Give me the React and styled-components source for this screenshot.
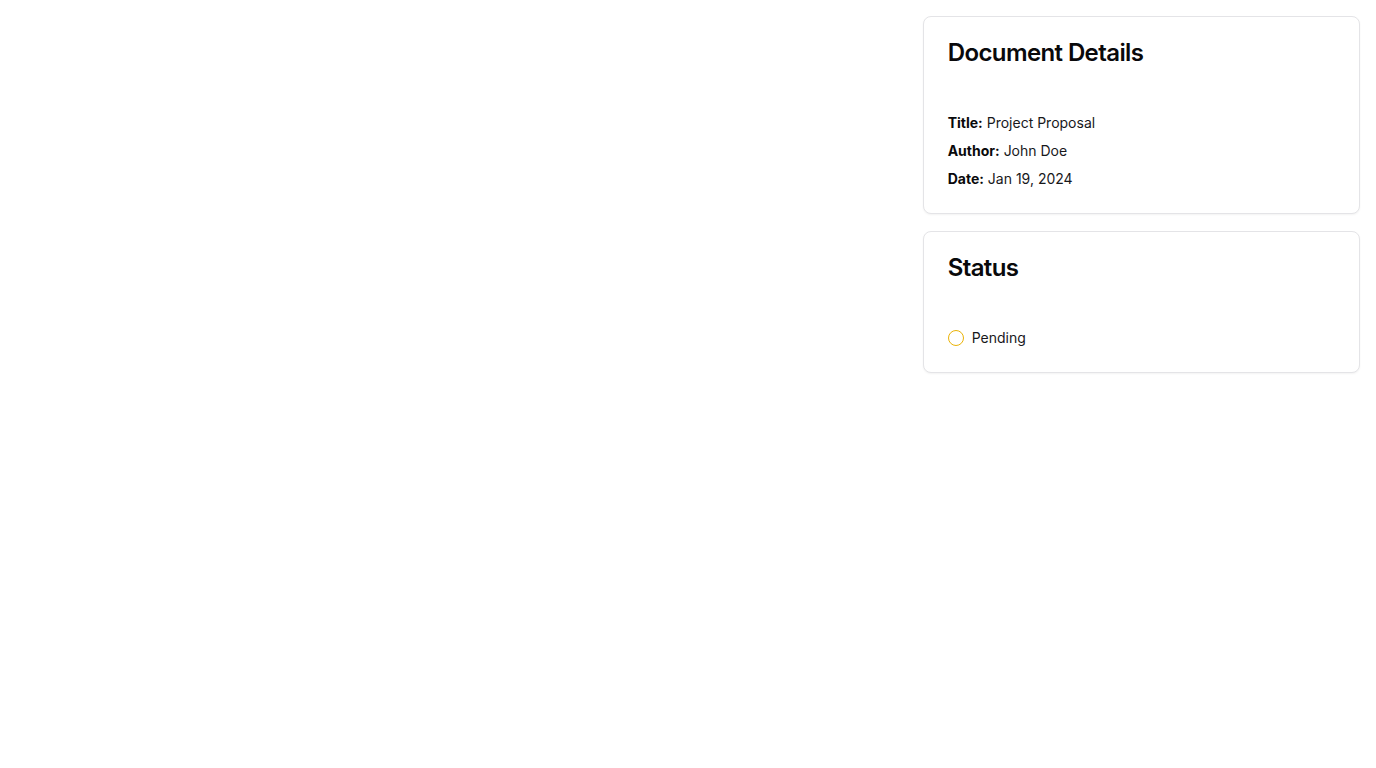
import React from 'react';
import styled, { createGlobalStyle } from 'styled-components';

const GlobalStyle = createGlobalStyle`
  * { box-sizing: border-box; }
  body {
    margin: 0;
    background: #fff;
    font-family: Inter, "Noto Sans", sans-serif;
    color: #09090b;
  }
`;

const Page = styled.div`
  display: grid;
  grid-template-columns: repeat(3, 1fr);
  gap: 16px;
  padding: 16px;
`;

const Column = styled.div`
  grid-column: ${(p) => p.col};
  display: flex;
  flex-direction: column;
  gap: 17px;
`;

const Card = styled.div`
  border: 1px solid #e4e4e7;
  border-radius: 8px;
  background: #fff;
  box-shadow: 0 1px 2px rgba(0, 0, 0, 0.05);
  padding: 24px;
`;

const CardTitle = styled.h3`
  margin: 0 0 48px;
  font-size: 24px;
  line-height: 24px;
  font-weight: 600;
  letter-spacing: -0.025em;
`;

const DetailList = styled.div`
  display: flex;
  flex-direction: column;
  gap: 8px;
`;

const Row = styled.p`
  margin: 0;
  font-size: 14px;
  line-height: 20px;
  color: #18181b;

  strong {
    font-weight: 700;
    color: #09090b;
  }
`;

const StatusRow = styled.div`
  display: flex;
  align-items: center;
  gap: 8px;
  font-size: 14px;
  line-height: 20px;
  color: #18181b;
`;

const StatusDot = styled.span`
  width: 16px;
  height: 16px;
  border-radius: 50%;
  border: 1.5px solid ${(p) => p.color};
`;

const details = [
  { label: 'Title', value: 'Project Proposal' },
  { label: 'Author', value: 'John Doe' },
  { label: 'Date', value: 'Jan 19, 2024' },
];

export default function App() {
  return (
    <>
      <GlobalStyle />
      <Page>
        <Column col="3">
          <Card>
            <CardTitle>Document Details</CardTitle>
            <DetailList>
              {details.map((d) => (
                <Row key={d.label}>
                  <strong>{d.label}:</strong> {d.value}
                </Row>
              ))}
            </DetailList>
          </Card>
          <Card>
            <CardTitle>Status</CardTitle>
            <StatusRow>
              <StatusDot color="#eab308" />
              Pending
            </StatusRow>
          </Card>
        </Column>
      </Page>
    </>
  );
}
